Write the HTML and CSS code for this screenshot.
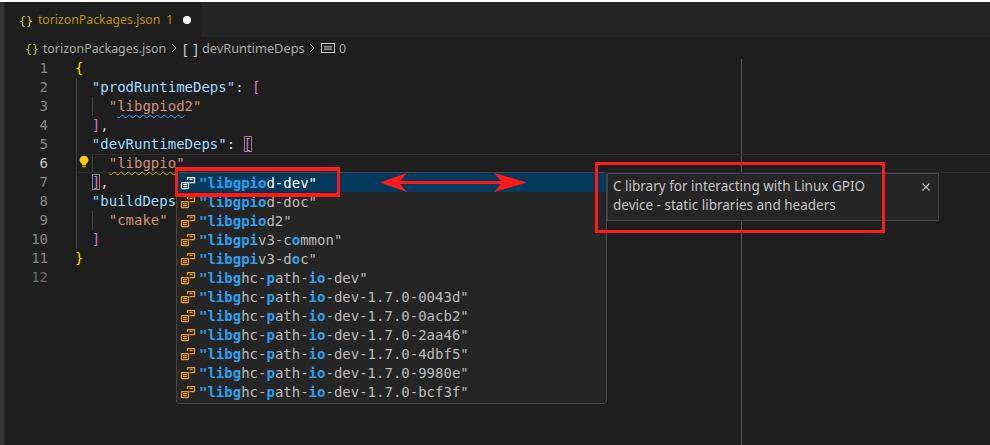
FILE: index.html
```html
<!DOCTYPE html>
<html lang="en">
<head>
<meta charset="utf-8">
<title>torizonPackages.json</title>
<link rel="stylesheet" href="styles.css">
</head>
<body>
<div class="window">
  <div class="topline"></div>
  <div class="main">
    <div class="activity"></div>
    <div class="editor">
      <div class="tabbar">
        <div class="tab">
          <span class="file-icon">{}</span>
          <span class="tab-name">torizonPackages.json</span>
          <span class="tab-count">1</span>
          <span class="dot"></span>
        </div>
      </div>
      <div class="crumbs">
        <span class="file-icon">{}</span>
        <span class="crumb-file">torizonPackages.json</span>
        <svg class="sep" width="6" height="10" viewBox="0 0 6 10"><path d="M1 1l4 4-4 4" fill="none" stroke="#aaa"/></svg>
        <span class="arr">[ ]</span>
        <span class="crumb-key">devRuntimeDeps</span>
        <svg class="sep" width="6" height="10" viewBox="0 0 6 10"><path d="M1 1l4 4-4 4" fill="none" stroke="#aaa"/></svg>
        <svg class="abc" width="14" height="10" viewBox="0 0 14 10"><rect x=".5" y=".5" width="13" height="9" fill="none" stroke="#c5c5c5"/><path d="M3 3.500h8M3 5h8M3 6.500h8" stroke="#999"/></svg>
        <span>0</span>
      </div>
      <div class="code">
        <div class="ruler"></div>
        <div class="line"><span class="num">1</span><span class="t"><span class="y">{</span></span></div>
        <div class="line"><span class="num">2</span><span class="t"><span class="g g1"></span>  <span class="k">"prodRuntimeDeps"</span>: <span class="m">[</span></span></div>
        <div class="line"><span class="num">3</span><span class="t"><span class="g g1"></span><span class="g g2"></span>    <span class="s">"<span class="wavy-b">libgpiod</span>2"</span></span></div>
        <div class="line"><span class="num">4</span><span class="t"><span class="g g1"></span>  <span class="m">]</span>,</span></div>
        <div class="line"><span class="num">5</span><span class="t"><span class="g g1"></span>  <span class="k">"devRuntimeDeps"</span>: <span class="m boxed">[</span></span></div>
        <div class="line current"><span class="num cur">6</span><svg class="bulb" width="10" height="13" viewBox="0 0 12 15"><path d="M6 .5a5.200 5.200 0 0 0-3 9.500c.6.500.8 1 .8 1.600h4.400c0-.6.2-1.100.8-1.600A5.200 5.200 0 0 0 6 .5z" fill="#fc0"/><rect x="4" y="12.300" width="4" height="2.200" fill="#c9a227"/></svg><span class="t"><span class="g g1"></span><span class="g g2"></span>    <span class="s wavy-y">"libgpio"</span></span></div>
        <div class="line"><span class="num">7</span><span class="t"><span class="g g1"></span>  <span class="m boxed">]</span>,</span></div>
        <div class="line"><span class="num">8</span><span class="t"><span class="g g1"></span>  <span class="k">"buildDeps"</span>: <span class="m">[</span></span></div>
        <div class="line"><span class="num">9</span><span class="t"><span class="g g1"></span><span class="g g2"></span>    <span class="s">"cmake"</span></span></div>
        <div class="line"><span class="num">10</span><span class="t"><span class="g g1"></span>  <span class="m">]</span></span></div>
        <div class="line"><span class="num">11</span><span class="t"><span class="y">}</span></span></div>
        <div class="line"><span class="num dim">12</span><span class="t"></span></div>

        <div class="suggest">
          <div class="row sel"><svg class="ico"><use href="#enum"/></svg><span><b>"libgpio</b>d-dev"</span></div>
          <div class="row"><svg class="ico"><use href="#enum"/></svg><span><b>"libgpio</b>d-doc"</span></div>
          <div class="row"><svg class="ico"><use href="#enum"/></svg><span><b>"libgpio</b>d2"</span></div>
          <div class="row"><svg class="ico"><use href="#enum"/></svg><span><b>"libgpi</b>v3-c<b>o</b>mmon"</span></div>
          <div class="row"><svg class="ico"><use href="#enum"/></svg><span><b>"libgpi</b>v3-d<b>o</b>c"</span></div>
          <div class="row"><svg class="ico"><use href="#enum"/></svg><span><b>"libg</b>hc-<b>p</b>ath-<b>io</b>-dev"</span></div>
          <div class="row"><svg class="ico"><use href="#enum"/></svg><span><b>"libg</b>hc-<b>p</b>ath-<b>io</b>-dev-1.7.0-0043d"</span></div>
          <div class="row"><svg class="ico"><use href="#enum"/></svg><span><b>"libg</b>hc-<b>p</b>ath-<b>io</b>-dev-1.7.0-0acb2"</span></div>
          <div class="row"><svg class="ico"><use href="#enum"/></svg><span><b>"libg</b>hc-<b>p</b>ath-<b>io</b>-dev-1.7.0-2aa46"</span></div>
          <div class="row"><svg class="ico"><use href="#enum"/></svg><span><b>"libg</b>hc-<b>p</b>ath-<b>io</b>-dev-1.7.0-4dbf5"</span></div>
          <div class="row"><svg class="ico"><use href="#enum"/></svg><span><b>"libg</b>hc-<b>p</b>ath-<b>io</b>-dev-1.7.0-9980e"</span></div>
          <div class="row"><svg class="ico"><use href="#enum"/></svg><span><b>"libg</b>hc-<b>p</b>ath-<b>io</b>-dev-1.7.0-bcf3f"</span></div>
        </div>
        <div class="details">
          <p>C library for interacting with Linux GPIO device - static libraries and headers</p>
          <svg class="close" width="10" height="10" viewBox="0 0 10 10"><path d="M1.500 1.500l7 7M8.500 1.500l-7 7" stroke="#c5c5c5" stroke-width="1.100" fill="none"/></svg>
        </div>
        <div class="mark mark-row"></div>
        <div class="mark mark-details"></div>
        <svg class="arrow" width="147" height="19" viewBox="0 0 147 19"><path d="M0 9.500L27 0L20 8H121L114 0L147 9.500L114 19L121 11H20L27 19z" fill="#ff1a1a"/></svg>
      </div>
    </div>
  </div>
</div>
<svg width="0" height="0" class="defs"><defs>
  <g id="enum" fill="none" stroke="currentColor" stroke-width="1.250">
    <path d="M7.500 5V2.500h7v5h-5"/>
    <path d="M9.500 4.500h3"/>
    <rect x="1.500" y="7.500" width="7" height="6" rx=".5"/>
    <path d="M3 9.500h4M3 11.500h4"/>
  </g>
</defs></svg>
</body>
</html>
```

FILE: styles.css
```css
* { box-sizing: border-box; }
html, body { margin: 0; padding: 0; background: #1e1e1e; overflow: hidden; }
.defs { position: absolute; }
.window { width: 990px; height: 445px; display: flex; flex-direction: column; background: #fff; }
.topline { height: 2px; background: #fff; }
.main { flex: 1; display: flex; min-height: 0; background: #1e1e1e; }
.activity { width: 5px; background: #333; border-right: 1px solid #2a2a2a; }
.editor { flex: 1; display: flex; flex-direction: column; min-width: 0; }
.tabbar { height: 35px; background: #252526; display: flex; }
.tab { width: 196px; background: #1e1e1e; display: flex; align-items: center; padding-left: 15px; font: 12.300px "Noto Sans", sans-serif; }
.file-icon { color: #cbcb41; font: 13px "Noto Sans", sans-serif; letter-spacing: 2px; margin-right: 4px; }
.tab-name { color: #b89500; }
.tab-count { color: #b89500; margin-left: 6px; font-size: 12px; }
.dot { width: 8px; height: 8px; border-radius: 50%; background: #fff; margin-left: 10px; }
.crumbs { height: 22px; display: flex; align-items: center; padding-left: 20px; font: 12.400px "Noto Sans", sans-serif; color: #a9a9a9; }
.crumbs .file-icon { color: #b5c040; margin-left: 1px; margin-right: 3px; }
.crumb-file { width: 127px; }
.sep { margin: 0 6px 0 1px; }
.crumbs .sep + .abc { margin-left: 0; }
.arr { color: #ccc; font-size: 14px; width: 19px; letter-spacing: 1px; }
.crumb-key { font-size: 12.800px; width: 106px; white-space: nowrap; }
.abc { margin-right: 4px; }
.code { position: relative; flex: 1; font: 14px/19px "DejaVu Sans Mono", monospace; color: #d4d4d4; }
.ruler { position: absolute; left: 736px; top: 0; bottom: 0; width: 1px; background: #5a5a5a; }
.line { height: 19px; display: flex; position: relative; white-space: pre; }
.num { width: 44px; text-align: right; color: #858585; flex: none; padding-right: 1px; }
.num.cur { color: #c6c6c6; }
.num.dim { color: #6a6a6a; }
.t { margin-left: 26px; position: relative; flex: 1; }
.current .t { border-top: 1px solid #2c2c2c; border-bottom: 1px solid #2c2c2c; line-height: 17px; }
.g { position: absolute; top: 0; bottom: 0; width: 1px; background: #404040; }
.g1 { left: 1px; }
.g2 { left: 17px; }
.y { color: #ffd700; }
.m { color: #da70d6; }
.k { color: #9cdcfe; }
.s { color: #ce9178; }
.boxed { outline: 1px solid #888; outline-offset: -1px; }
.wavy-b { text-decoration: underline wavy #3794ff 1px; text-underline-offset: 3px; }
.wavy-y { text-decoration: underline wavy #cca700 1px; text-underline-offset: 3px; }
.bulb { position: absolute; left: 74px; top: 1px; }
.suggest { position: absolute; left: 171px; top: 113px; width: 431px; height: 232px; background: #252526; border: 1px solid #454545; border-radius: 3px; }
.row { height: 19px; display: flex; align-items: center; padding: 1px 0 0 3px; color: #bbb; white-space: pre; }
.row .ico { width: 16px; height: 16px; color: #ee9d28; margin-right: 3px; flex: none; }
.row b { color: #2aa1f0; font-weight: bold; }
.row.sel { background: #04395e; color: #fff; }
.row.sel .ico { color: #fff; }
.details { position: absolute; left: 602px; top: 114px; width: 332px; height: 48px; background: #252526; border: 1px solid #454545; padding: 3px 30px 0 5px; font: 13.500px/19px "Noto Sans", sans-serif; color: #c4c4c4; display: flex; }
.details p { margin: 0; flex: 1; }
.close { position: absolute; right: 7px; top: 8px; }
.mark { position: absolute; border: 3px solid #ff1a1a; }
.mark-row { left: 170px; top: 108px; width: 165px; height: 30px; border-width: 4px 3px; }
.mark-details { left: 590px; top: 103px; width: 290px; height: 71px; }
.arrow { position: absolute; left: 375px; top: 114px; }
```
